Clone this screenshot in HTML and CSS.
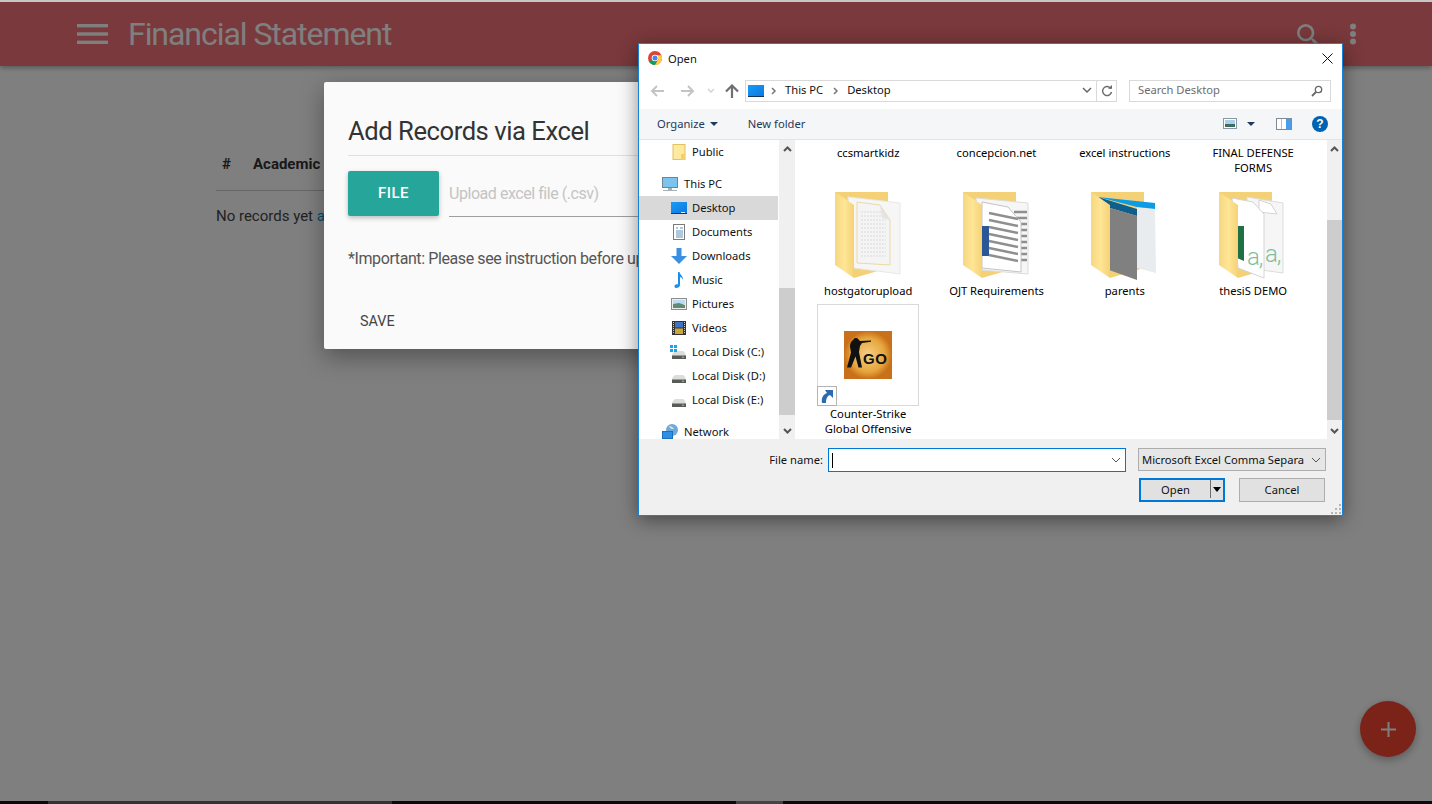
FILE: index.html
```html
<!DOCTYPE html>
<html lang="en">
<head>
    <meta charset="UTF-8">
    <meta name="viewport" content="width=device-width, initial-scale=1.0">
    <title>Financial Statement</title>
    <link rel="stylesheet" href="styles.css">
</head>
<body>
    <svg class="icon-defs" width="0" height="0">
        <defs>
            <linearGradient id="flap" x1="0" y1="0" x2="1" y2="0">
                <stop offset="0" stop-color="#f6d77f"/>
                <stop offset="0.5" stop-color="#ffe596"/>
                <stop offset="1" stop-color="#f5d277"/>
            </linearGradient>
            <linearGradient id="screen" x1="0" y1="0" x2="1" y2="1">
                <stop offset="0" stop-color="#1a9bf5"/>
                <stop offset="1" stop-color="#0b78e0"/>
            </linearGradient>
            <radialGradient id="csgo">
                <stop offset="0" stop-color="#f6d084"/>
                <stop offset="0.7" stop-color="#e6a63e"/>
                <stop offset="1" stop-color="#c9701a"/>
            </radialGradient>
            <symbol id="i-desktop" viewBox="0 0 16 16">
                <rect x="0" y="2" width="16" height="12" fill="url(#screen)"/>
                <rect x="0" y="13" width="16" height="1" fill="#12365c"/>
                <rect x="10" y="12" width="4" height="1" fill="#d8eeff"/>
            </symbol>
            <symbol id="i-disk" viewBox="0 0 16 16">
                <path d="M1 11q1-3 3-4h8q2 1 3 4z" fill="#dcdcdc"/>
                <rect x="1" y="11" width="14" height="4" fill="#5a5a5a"/>
                <rect x="1" y="11" width="14" height="1" fill="#9a9a9a"/>
                <rect x="11" y="12.500" width="2" height="1.500" fill="#4ccf4c"/>
            </symbol>
        </defs>
    </svg>

    <div class="browser-edge"></div>

    <div class="app">
        <header class="appbar">
            <svg class="burger" width="31" height="20" viewBox="0 0 31 20">
                <rect y="0" width="31" height="3.4" fill="#fff"/>
                <rect y="8.3" width="31" height="3.4" fill="#fff"/>
                <rect y="16.6" width="31" height="3.4" fill="#fff"/>
            </svg>
            <h1 class="appbar-title">Financial Statement</h1>
            <svg class="appbar-search" width="32" height="32" viewBox="0 0 24 24">
                <path fill="#fff" d="M15.5 14h-.79l-.28-.27A6.47 6.47 0 0 0 16 9.5 6.5 6.5 0 1 0 9.5 16c1.61 0 3.09-.59 4.23-1.57l.27.28v.79l5 4.99L20.49 19l-4.99-5zm-6 0C7.01 14 5 11.99 5 9.5S7.01 5 9.5 5 14 7.01 14 9.5 11.99 14 9.5 14z"/>
            </svg>
            <svg class="appbar-more" width="8" height="24" viewBox="0 0 8 24">
                <circle cx="4" cy="4.5" r="3" fill="#fff"/>
                <circle cx="4" cy="12" r="3" fill="#fff"/>
                <circle cx="4" cy="19.5" r="3" fill="#fff"/>
            </svg>
        </header>

        <main class="records">
            <table class="records-table">
                <thead>
                    <tr>
                        <th class="col-num">#</th>
                        <th>Academic Year</th>
                    </tr>
                </thead>
                <tbody>
                    <tr>
                        <td colspan="2">No records yet <a href="#">add one</a></td>
                    </tr>
                </tbody>
            </table>
        </main>

        <button class="fab">
            <svg width="15" height="15" viewBox="0 0 15 15">
                <rect x="6.5" width="2" height="15" fill="#fff"/>
                <rect y="6.5" width="15" height="2" fill="#fff"/>
            </svg>
        </button>

        <div class="overlay"></div>

        <section class="modal">
            <h4 class="modal-title">Add Records via Excel</h4>
            <div class="file-row">
                <button class="file-btn">FILE</button>
                <div class="file-path">Upload excel file (.csv)</div>
            </div>
            <p class="modal-note">*Important: Please see instruction before uploading</p>
            <div class="modal-footer">
                <a class="save-link" href="#">SAVE</a>
            </div>
        </section>
    </div>

    <div class="taskbar">
        <span class="task task-a"></span>
        <span class="task task-on task-b"></span>
        <span class="task task-c"></span>
        <span class="task task-on2 task-d"></span>
        <span class="task task-e"></span>
    </div>

    <div class="dialog">
        <div class="dlg-title">
            <svg width="14" height="14" viewBox="0 0 14 14">
                <circle cx="7" cy="7" r="7" fill="#db4437"/>
                <path d="M7 7 1 10.5A7 7 0 0 0 7 14l3.5-6z" fill="#0f9d58"/>
                <path d="M7 7l3.500 1L7 14A7 7 0 0 0 13.400 4.200L7 4.200z" fill="#ffcd40"/>
                <circle cx="7" cy="7" r="3.300" fill="#fff"/>
                <circle cx="7" cy="7" r="2.500" fill="#4285f4"/>
            </svg>
            <span>Open</span>
            <svg class="dlg-close" width="11" height="11" viewBox="0 0 11 11">
                <path d="M0.500 0.500l10 10M10.500 0.500l-10 10" stroke="#111" fill="none"/>
            </svg>
        </div>

        <div class="dlg-nav">
            <svg class="nav-back" width="16" height="12" viewBox="0 0 16 12">
                <path d="M14 6H2M7 1 2 6l5 5" stroke="#c4c4c4" stroke-width="2" fill="none"/>
            </svg>
            <svg class="nav-fwd" width="16" height="12" viewBox="0 0 16 12">
                <path d="M2 6h12M9 1l5 5-5 5" stroke="#c4c4c4" stroke-width="2" fill="none"/>
            </svg>
            <svg class="nav-drop" width="12" height="6" viewBox="0 0 12 6">
                <path d="M3 1l3 3 3-3" stroke="#d0d0d0" stroke-width="1.300" fill="none"/>
            </svg>
            <svg class="nav-up" width="16" height="14" viewBox="0 0 16 14">
                <path d="M8 14V2M2 7.500 8 1.500l6 6" stroke="#6f6f6f" stroke-width="2.200" fill="none"/>
            </svg>
            <div class="address">
                <svg class="addr-pc" width="16" height="12" viewBox="0 0 16 12">
                    <rect width="16" height="12" fill="url(#screen)"/>
                    <rect y="11" width="16" height="1" fill="#12365c"/>
                </svg>
                <span class="crumb-sep">
                    <svg width="6" height="8" viewBox="0 0 6 8"><path d="M1 1l3 3-3 3" stroke="#777" stroke-width="1.500" fill="none"/></svg>
                </span>
                <span class="crumb">This PC</span>
                <span class="crumb-sep crumb-sep2">
                    <svg width="6" height="8" viewBox="0 0 6 8"><path d="M1 1l3 3-3 3" stroke="#777" stroke-width="1.500" fill="none"/></svg>
                </span>
                <span class="crumb">Desktop</span>
                <svg class="addr-chevron" width="12" height="7" viewBox="0 0 12 7">
                    <path d="M2 1l4 4 4-4" stroke="#666" stroke-width="1.500" fill="none"/>
                </svg>
                <div class="addr-refresh">
                    <svg width="12" height="12" viewBox="0 0 12 12">
                        <path d="M9.800 3.500A4.500 4.500 0 1 0 10.500 7" stroke="#6a6a6a" stroke-width="1.400" fill="none"/>
                        <path d="M7 3.800h4V0z" fill="#6a6a6a"/>
                    </svg>
                </div>
            </div>
            <div class="searchbox">
                <span>Search Desktop</span>
                <svg width="12" height="12" viewBox="0 0 12 12">
                    <circle cx="7.500" cy="4.500" r="3.200" stroke="#666" stroke-width="1.300" fill="none"/>
                    <path d="M5 7 1 11" stroke="#666" stroke-width="1.800"/>
                </svg>
            </div>
        </div>

        <div class="dlg-tools">
            <span class="tool">Organize</span>
            <span class="tool-caret"></span>
            <span class="tool tool-new">New folder</span>
            <svg class="view-ic" width="14" height="11" viewBox="0 0 14 11">
                <rect x="0.500" y="0.500" width="13" height="10" fill="#fff" stroke="#8c98a4"/>
                <rect x="2" y="2" width="10" height="4" fill="#a8d1ec"/>
                <rect x="2" y="6" width="10" height="3" fill="#3f6c62"/>
            </svg>
            <span class="tool-caret view-caret"></span>
            <svg class="pane-ic" width="16" height="12" viewBox="0 0 16 12">
                <rect x="0.500" y="0.500" width="15" height="11" fill="#fff" stroke="#7f8b97"/>
                <rect x="10" y="1" width="5" height="10" fill="#4a9de8"/>
                <rect x="5" y="1" width="1" height="10" fill="#b6bec6"/>
            </svg>
            <div class="help-ic">?</div>
        </div>

        <div class="dlg-body">
            <ul class="tree">
                <li class="tree-row">
                    <svg width="16" height="16" viewBox="0 0 16 16">
                        <rect x="2" y="0.500" width="12" height="15" fill="#fde99f" stroke="#e3c15f"/>
                        <rect x="10" y="10" width="4" height="6" fill="#f6cf62"/>
                    </svg>
                    Public
                </li>
                <li class="tree-row tree-top tree-gap">
                    <svg width="16" height="16" viewBox="0 0 16 16">
                        <rect x="0.500" y="1.500" width="15" height="10" fill="#7cc4ee" stroke="#6b8797"/>
                        <rect x="6" y="12" width="4" height="2" fill="#a5b2ba"/>
                        <rect x="1" y="14" width="14" height="1" fill="#a5b2ba"/>
                    </svg>
                    This PC
                </li>
                <li class="tree-row tree-selected">
                    <svg width="16" height="16"><use href="#i-desktop"/></svg>
                    Desktop
                </li>
                <li class="tree-row">
                    <svg width="16" height="16" viewBox="0 0 16 16">
                        <rect x="2.500" y="0.500" width="11" height="15" fill="#fff" stroke="#7b7b7b"/>
                        <path d="M5 4h2M9 4h3M5 7h7M5 9h7M5 11h7M5 13h7" stroke="#5d93b8"/>
                    </svg>
                    Documents
                </li>
                <li class="tree-row">
                    <svg width="16" height="16" viewBox="0 0 16 16">
                        <path d="M5.500 0h5v8H16l-8 8-8-8h5.500z" fill="#3b8fe3"/>
                    </svg>
                    Downloads
                </li>
                <li class="tree-row">
                    <svg width="16" height="16" viewBox="0 0 16 16">
                        <path d="M7 0h1.500c.5 3 4 4 3.500 8-.5-2-2-3-3-3v8c0 2-2 3-4 3s-2-3 0-3.500c.7-.2 1.500-.2 2 0z" fill="#1c8ee6"/>
                    </svg>
                    Music
                </li>
                <li class="tree-row">
                    <svg width="16" height="16" viewBox="0 0 16 16">
                        <rect x="0.500" y="2.500" width="15" height="11" fill="#eee" stroke="#8d8d8d"/>
                        <rect x="2" y="4" width="12" height="4" fill="#bcdcf0"/>
                        <path d="M2 8l6-1 6 2v3H2z" fill="#5f8a74"/>
                    </svg>
                    Pictures
                </li>
                <li class="tree-row">
                    <svg width="16" height="16" viewBox="0 0 16 16">
                        <rect x="1" y="1" width="14" height="14" fill="#333"/>
                        <rect x="4" y="2" width="8" height="5.500" fill="#3f74c4"/>
                        <rect x="4" y="8.500" width="8" height="5.500" fill="#c9a838"/>
                        <path d="M2.500 2v12M13.500 2v12" stroke="#ccc" stroke-dasharray="1 1"/>
                    </svg>
                    Videos
                </li>
                <li class="tree-row tree-disk-c">
                    <span class="win-flag"><i></i><i></i><i></i><i></i></span>
                    <svg width="16" height="16"><use href="#i-disk"/></svg>
                    Local Disk (C:)
                </li>
                <li class="tree-row">
                    <svg width="16" height="16"><use href="#i-disk"/></svg>
                    Local Disk (D:)
                </li>
                <li class="tree-row">
                    <svg width="16" height="16"><use href="#i-disk"/></svg>
                    Local Disk (E:)
                </li>
                <li class="tree-row tree-top tree-gap">
                    <svg width="16" height="16" viewBox="0 0 16 16">
                        <circle cx="10" cy="6" r="6" fill="#6fa9d8"/>
                        <path d="M7 2c2 0 4 1 5 3-2 0-4 0-5-3z" fill="#cfe6f7"/>
                        <rect x="0.500" y="7.500" width="10" height="7" fill="#2f8fe6" stroke="#1d6fb8"/>
                        <rect x="3" y="15" width="5" height="1" fill="#9db4c6"/>
                    </svg>
                    Network
                </li>
            </ul>

            <div class="scrollbar">
                <div class="sb-arrow">
                    <svg width="9" height="6" viewBox="0 0 9 6"><path d="M1 5l3.500-3.500L8 5" stroke="#555" stroke-width="2" fill="none"/></svg>
                </div>
                <div class="sb-thumb sb-thumb-left"></div>
                <div class="sb-arrow sb-arrow-down">
                    <svg width="9" height="6" viewBox="0 0 9 6"><path d="M1 1l3.500 3.500L8 1" stroke="#555" stroke-width="2" fill="none"/></svg>
                </div>
            </div>

            <div class="files">
                <div class="file"><span class="file-name">ccsmartkidz</span></div>
                <div class="file"><span class="file-name">concepcion.net</span></div>
                <div class="file"><span class="file-name">excel instructions</span></div>
                <div class="file"><span class="file-name">FINAL DEFENSE FORMS</span></div>

                <div class="file">
                    <svg class="folder" width="80" height="93" viewBox="0 0 80 93">
                        <polygon points="7,2 60,2 60,78 26,88" fill="#f4d176"/>
                        <polygon points="20,7 72,13 72,84 26,78" fill="#f6f6f6" stroke="#e8e8e8"/>
                        <polygon points="29,12 52,15 62,30 62,75 29,73" fill="#f4f4f4" stroke="#eed9a6"/>
                        <path d="M33 22h20M33 26h25M33 30h25M33 34h25M33 38h25M33 42h25M33 46h25M33 50h25M33 54h25M33 58h25M33 62h25M33 66h25" stroke="#dadada" stroke-dasharray="2 1"/>
                        <polygon points="52,15 62,30 54,28" fill="#e4e4e4"/>
                        <polygon points="7,2 26,15 26,88 7,75" fill="url(#flap)"/>
                    </svg>
                    <span class="file-name">hostgatorupload</span>
                </div>
                <div class="file">
                    <svg class="folder" width="80" height="93" viewBox="0 0 80 93">
                        <polygon points="7,2 60,2 60,78 26,88" fill="#f4d176"/>
                        <polygon points="20,8 72,13 72,84 26,80" fill="#f6f6f6" stroke="#dcdcdc"/>
                        <path d="M58 22h13M58 28h13M58 34h13M58 40h13M58 46h13M58 52h13M58 58h13M58 64h13M58 70h13" stroke="#8f8f8f" stroke-width="2.500"/>
                        <polygon points="26,12 52,17 65,32 65,82 26,78" fill="#fff" stroke="#c4c4c4"/>
                        <rect x="26" y="36" width="7" height="30" fill="#2b5797"/>
                        <path d="M33 23l29 6M33 30l29 6M33 37l29 6M33 44l29 6M33 51l29 6M33 58l29 6M33 65l29 6" stroke="#8f8f8f" stroke-width="2.500"/>
                        <polygon points="7,2 26,15 26,88 7,75" fill="url(#flap)"/>
                    </svg>
                    <span class="file-name">OJT Requirements</span>
                </div>
                <div class="file">
                    <svg class="folder" width="80" height="93" viewBox="0 0 80 93">
                        <polygon points="6,2 59,2 59,78 25,88" fill="#f4d176"/>
                        <polygon points="52,17 70,19 71,83 52,78" fill="#e8ecef"/>
                        <polygon points="13,7 70,13 70,19 52,17" fill="#0d9be6"/>
                        <polygon points="13,7 52,19 52,26 25,18" fill="#0f5f8c"/>
                        <polygon points="25,18 52,26 52,90 24,80" fill="#808080"/>
                        <polygon points="6,2 25,15 25,88 6,75" fill="url(#flap)"/>
                    </svg>
                    <span class="file-name">parents</span>
                </div>
                <div class="file">
                    <svg class="folder" width="80" height="93" viewBox="0 0 80 93">
                        <polygon points="6,2 59,2 59,78 25,88" fill="#f4d176"/>
                        <polygon points="34,7 70,13 70,83 34,78" fill="#f6f6f6" stroke="#dcdcdc"/>
                        <polygon points="46,10 58,14 64,24 46,22" fill="#fff" stroke="#d4d4d4"/>
                        <text x="52" y="72" class="folder-a">a,</text>
                        <polygon points="19,8 40,12 51,24 51,88 25,78" fill="#fff" stroke="#d4d4d4"/>
                        <polygon points="24,36 31,36 31,71 24,68" fill="#1e7145"/>
                        <text x="34" y="75" class="folder-a">a,</text>
                        <polygon points="6,2 25,15 25,88 6,75" fill="url(#flap)"/>
                    </svg>
                    <span class="file-name">thesiS DEMO</span>
                </div>

                <div class="file">
                    <div class="tile">
                        <svg width="48" height="48" viewBox="0 0 48 48">
                            <rect width="48" height="48" fill="url(#csgo)"/>
                            <path d="M9 9.500a3 3 0 0 1 5.500-1l1.500 1.500 11-.5v1.200l-9 1.300-2 3-1 6 3 15.500h-3.500l-3-11-4.500 11H3l4-15-1-6c0-3 1-5 3-6.500z" fill="#111"/>
                            <text x="19" y="33" class="csgo-text">GO</text>
                        </svg>
                        <div class="shortcut">
                            <svg width="14" height="14" viewBox="0 0 14 14">
                                <path d="M2 14C1 8 4 5 7 4L5 1h8v8L10 6C7 7 6 10 6 14z" fill="#2b6cb0"/>
                            </svg>
                        </div>
                    </div>
                    <span class="file-name">Counter-Strike Global Offensive</span>
                </div>
            </div>

            <div class="scrollbar scrollbar-files">
                <div class="sb-arrow">
                    <svg width="9" height="6" viewBox="0 0 9 6"><path d="M1 5l3.500-3.500L8 5" stroke="#555" stroke-width="2" fill="none"/></svg>
                </div>
                <div class="sb-thumb sb-thumb-right"></div>
                <div class="sb-arrow sb-arrow-down">
                    <svg width="9" height="6" viewBox="0 0 9 6"><path d="M1 1l3.500 3.500L8 1" stroke="#555" stroke-width="2" fill="none"/></svg>
                </div>
            </div>
        </div>

        <div class="dlg-footer">
            <div class="footer-row">
                <label class="name-label">File name:</label>
                <div class="name-input">
                    <span class="caret-bar"></span>
                    <svg width="10" height="6" viewBox="0 0 10 6"><path d="M1 1l4 4 4-4" stroke="#555" fill="none"/></svg>
                </div>
                <div class="type-select">
                    <span>Microsoft Excel Comma Separa</span>
                    <svg width="10" height="6" viewBox="0 0 10 6"><path d="M1 1l4 4 4-4" stroke="#555" fill="none"/></svg>
                </div>
            </div>
            <div class="footer-row footer-buttons">
                <div class="win-btn win-btn-open">
                    <span class="open-label">Open</span>
                    <span class="open-split"></span>
                    <span class="open-arrow"></span>
                </div>
                <div class="win-btn win-btn-cancel">Cancel</div>
            </div>
            <svg class="grip" width="11" height="11" viewBox="0 0 11 11">
                <path d="M8 0h2v2H8zM4 4h2v2H4zM8 4h2v2H8zM0 8h2v2H0zM4 8h2v2H4zM8 8h2v2H8z" fill="#b5b5b5"/>
            </svg>
        </div>
    </div>
</body>
</html>
```

FILE: styles.css
```css
* {
    box-sizing: border-box;
}

html, body {
    margin: 0;
    height: 100%;
}

body {
    position: relative;
    display: flex;
    flex-direction: column;
    height: 804px;
    overflow: hidden;
    font-family: Roboto, "Liberation Sans", sans-serif;
    background: #fff;
}

.icon-defs {
    position: absolute;
}

.browser-edge {
    height: 2px;
    background: #c6c6c6;
}

.app {
    position: relative;
    flex: 1;
    overflow: hidden;
    background: #fff;
}

.taskbar {
    display: flex;
    height: 3px;
    background: #0a0a0a;
}

.task-a { width: 48px; }
.task-b { width: 344px; background: #333; }
.task-c { width: 344px; }
.task-d { width: 47px; background: #444; }

/* app bar */
.appbar {
    display: flex;
    align-items: center;
    height: 64px;
    padding: 0 75px 0 77px;
    background: #f47278;
    color: #fff;
    box-shadow: 0 2px 5px rgba(0, 0, 0, .3);
}

.appbar-title {
    margin: 0 0 0 20px;
    font-size: 32px;
    font-weight: 400;
    letter-spacing: -1.05px;
    line-height: 63px;
}

.appbar-search {
    margin: 4px 0 0 auto;
}

.appbar-more {
    margin-left: 24px;
}

/* records table behind the modal */
.records {
    margin: 74px 0 0 216px;
    width: 1000px;
}

.records-table {
    width: 100%;
    border-collapse: collapse;
    font-size: 15px;
    color: #444;
}

.records-table th {
    height: 50px;
    padding: 0 6px 2px;
    text-align: left;
    color: #333;
    border-bottom: 1px solid #cdcdcd;
}

.records-table th.col-num {
    width: 31px;
}

.records-table td {
    height: 50px;
    padding: 2px 0 0;
}

.records-table a {
    color: #039be5;
    text-decoration: none;
}

.fab {
    position: absolute;
    right: 16px;
    bottom: 44px;
    display: flex;
    align-items: center;
    justify-content: center;
    width: 56px;
    height: 56px;
    padding: 0;
    border: 0;
    border-radius: 50%;
    background: #f64632;
    box-shadow: 0 3px 8px rgba(0, 0, 0, .3);
}

.overlay {
    position: absolute;
    inset: 0;
    background: rgba(0, 0, 0, .5);
}

/* excel modal */
.modal {
    position: absolute;
    left: 324px;
    top: 80px;
    display: flex;
    flex-direction: column;
    width: 784px;
    height: 267px;
    padding: 24px 24px 0;
    background: #fafafa;
    border-radius: 2px;
    box-shadow: 0 8px 24px rgba(0, 0, 0, .35);
}

.modal-title {
    margin: 0;
    height: 50px;
    font-size: 25.6px;
    font-weight: 400;
    letter-spacing: -.45px;
    line-height: 51px;
    color: #333;
    border-bottom: 1px solid #e0e0e0;
}

.file-row {
    display: flex;
    margin-top: 15px;
}

.file-btn {
    width: 91px;
    height: 45px;
    padding: 0 0 2px;
    border: 0;
    border-radius: 2px;
    background: #26a69a;
    color: #fff;
    font: 500 15px Roboto, sans-serif;
    letter-spacing: .5px;
    box-shadow: 0 2px 5px rgba(0, 0, 0, .25);
}

.file-path {
    flex: 1;
    margin-left: 10px;
    font-size: 16px;
    letter-spacing: -.45px;
    line-height: 45px;
    color: #c4c4c4;
    border-bottom: 1px solid #9e9e9e;
}

.modal-note {
    margin: 31px 0 0;
    font-size: 16px;
    letter-spacing: -.4px;
    line-height: 22px;
    color: #555;
    white-space: nowrap;
}

.modal-footer {
    display: flex;
    align-items: center;
    height: 56px;
    margin-top: auto;
    padding-left: 12px;
}

.save-link {
    font-size: 14.4px;
    color: #444;
    text-decoration: none;
}

/* windows file dialog */
.dialog {
    position: absolute;
    left: 638px;
    top: 43px;
    display: flex;
    flex-direction: column;
    width: 705px;
    height: 473px;
    background: #fff;
    border: 1px solid #1683d8;
    font-family: "Noto Sans", "Open Sans", sans-serif;
    font-size: 11.2px;
    color: #111;
    box-shadow: 0 4px 18px rgba(0, 0, 0, .45);
}

.dlg-title {
    display: flex;
    align-items: center;
    flex: none;
    height: 28px;
    padding: 0 9px;
    gap: 6px;
}

.dlg-close {
    margin: 0 0 0 auto;
}

.dlg-nav {
    display: flex;
    align-items: center;
    flex: none;
    height: 37px;
    padding-left: 11px;
}

.nav-fwd { margin-left: 13px; }
.nav-drop { margin-left: 10px; }
.nav-up { margin-left: 7px; }

.address {
    display: flex;
    align-items: center;
    flex: 1;
    height: 22px;
    margin-left: 5px;
    padding-left: 2px;
    border: 1px solid #d9d9d9;
}

.crumb {
    padding-bottom: 2px;
}

.addr-pc {
    margin-right: 7px;
}

.crumb-sep {
    display: flex;
    align-items: center;
    width: 14px;
}

.crumb-sep2 {
    margin-left: 10px;
}

.addr-chevron {
    margin: 0 3px 0 auto;
}

.addr-refresh {
    display: flex;
    align-items: center;
    justify-content: center;
    width: 20px;
    height: 100%;
    border-left: 1px solid #d9d9d9;
}

.searchbox {
    display: flex;
    align-items: center;
    justify-content: space-between;
    flex: none;
    width: 202px;
    height: 22px;
    margin: 0 11px 0 12px;
    padding: 0 7px 0 8px;
    border: 1px solid #d9d9d9;
    color: #6d6d6d;
}

.searchbox span {
    padding-bottom: 2px;
}

.dlg-tools {
    display: flex;
    align-items: center;
    flex: none;
    height: 31px;
    padding: 0 14px 1px 18px;
    background: #f5f6f7;
    border-bottom: 1px solid #e4e4e4;
    color: #1e395b;
}

.tool-caret {
    width: 0;
    height: 0;
    margin-left: 5px;
    border: 4px solid transparent;
    border-top-color: #1e395b;
    border-bottom: 0;
}

.tool-new {
    margin-left: 30px;
}

.view-ic {
    margin-left: auto;
}

.view-caret {
    margin-left: 10px;
}

.pane-ic {
    margin-left: 21px;
}

.help-ic {
    width: 16px;
    height: 16px;
    margin-left: 20px;
    border-radius: 50%;
    background: #0063b1;
    color: #fff;
    font: bold 12px/16px "Liberation Sans", sans-serif;
    text-align: center;
}

.dlg-body {
    display: flex;
    flex: none;
    height: 299px;
    overflow: hidden;
}

.tree {
    flex: none;
    width: 140px;
    margin: 0;
    padding: 0;
    list-style-type: none;
    overflow: hidden;
}

.tree-row {
    position: relative;
    display: flex;
    align-items: center;
    gap: 5px;
    height: 24px;
    padding: 0 0 2px 32px;
    white-space: nowrap;
}

.tree-row svg {
    margin-top: 2px;
}

.tree-top {
    padding-left: 23px;
    gap: 6px;
}

.tree-gap {
    margin-top: 8px;
}

.tree-selected {
    margin-right: 1px;
    background: #d9d9d9;
}

.win-flag {
    position: absolute;
    left: 31px;
    top: 5px;
    display: grid;
    grid-template-columns: 3px 3px;
    gap: 1px;
}

.win-flag i {
    height: 3px;
    background: #18a5ef;
}

.scrollbar {
    display: flex;
    flex-direction: column;
    flex: none;
    width: 16px;
    background: #f0f0f0;
}

.scrollbar-files {
    width: 15px;
}

.sb-arrow {
    display: flex;
    align-items: center;
    justify-content: center;
    flex: none;
    height: 17px;
}

.sb-arrow-down {
    margin-top: auto;
}

.sb-thumb {
    background: #cdcdcd;
}

.sb-thumb-left {
    height: 127px;
    margin-top: 131px;
}

.sb-thumb-right {
    height: 200px;
    margin-top: 63px;
}

.files {
    display: grid;
    flex: 1;
    grid-template-columns: repeat(4, 128.33px);
    grid-template-rows: 45px 114px auto;
    margin-left: 2px;
    padding: 5px 0 0 7px;
    align-content: start;
    overflow: hidden;
}

.file {
    display: flex;
    flex-direction: column;
    align-items: center;
    text-align: center;
}

.file-name {
    width: 112px;
    line-height: 15px;
    color: #000;
}

.folder {
    display: block;
}

.folder-a {
    font: 300 24px Roboto, sans-serif;
    letter-spacing: -1px;
    fill: #7fbf9f;
}

.csgo-text {
    font: bold 15px "Liberation Sans", sans-serif;
    fill: #111;
    letter-spacing: .5px;
}

.tile {
    position: relative;
    display: flex;
    align-items: center;
    justify-content: center;
    width: 102px;
    height: 102px;
    border: 1px solid #d9d9d9;
}

.shortcut {
    position: absolute;
    left: -1px;
    bottom: -1px;
    display: flex;
    align-items: center;
    justify-content: center;
    width: 20px;
    height: 20px;
    background: #fff;
    border: 1px solid #b4b4b4;
}

.dlg-footer {
    position: relative;
    flex: 1;
    padding-top: 9px;
    background: #f0f0f0;
}

.footer-row {
    display: flex;
    align-items: flex-start;
    justify-content: flex-end;
    padding-right: 16px;
}

.name-label {
    margin-right: 5px;
    line-height: 24px;
}

.name-input {
    display: flex;
    align-items: center;
    justify-content: space-between;
    width: 298px;
    height: 24px;
    padding: 0 4px 0 3px;
    background: #fff;
    border: 1px solid #0078d7;
}

.caret-bar {
    width: 1px;
    height: 15px;
    background: #000;
}

.type-select {
    display: flex;
    align-items: center;
    justify-content: space-between;
    width: 188px;
    height: 23px;
    margin-left: 12px;
    padding: 0 4px 0 3px;
    background: #e6e6e6;
    border: 1px solid #adadad;
    white-space: nowrap;
}

.footer-buttons {
    margin-top: 6px;
    padding-right: 17px;
}

.win-btn {
    display: flex;
    align-items: center;
    justify-content: center;
    width: 86px;
    height: 24px;
    padding-bottom: 2px;
    background: #e1e1e1;
    border: 1px solid #adadad;
}

.win-btn-open {
    justify-content: flex-start;
    padding-bottom: 2px;
    border: 2px solid #0078d7;
}

.win-btn-cancel {
    margin-left: 14px;
}

.open-label {
    width: 69px;
    text-align: center;
}

.open-split {
    width: 1px;
    height: 18px;
    background: #6e6e6e;
}

.open-arrow {
    width: 0;
    height: 0;
    margin-left: 2px;
    border: 4.500px solid transparent;
    border-top: 5px solid #000;
    border-bottom: 0;
}

.grip {
    position: absolute;
    right: 0;
    bottom: 0;
}
```
